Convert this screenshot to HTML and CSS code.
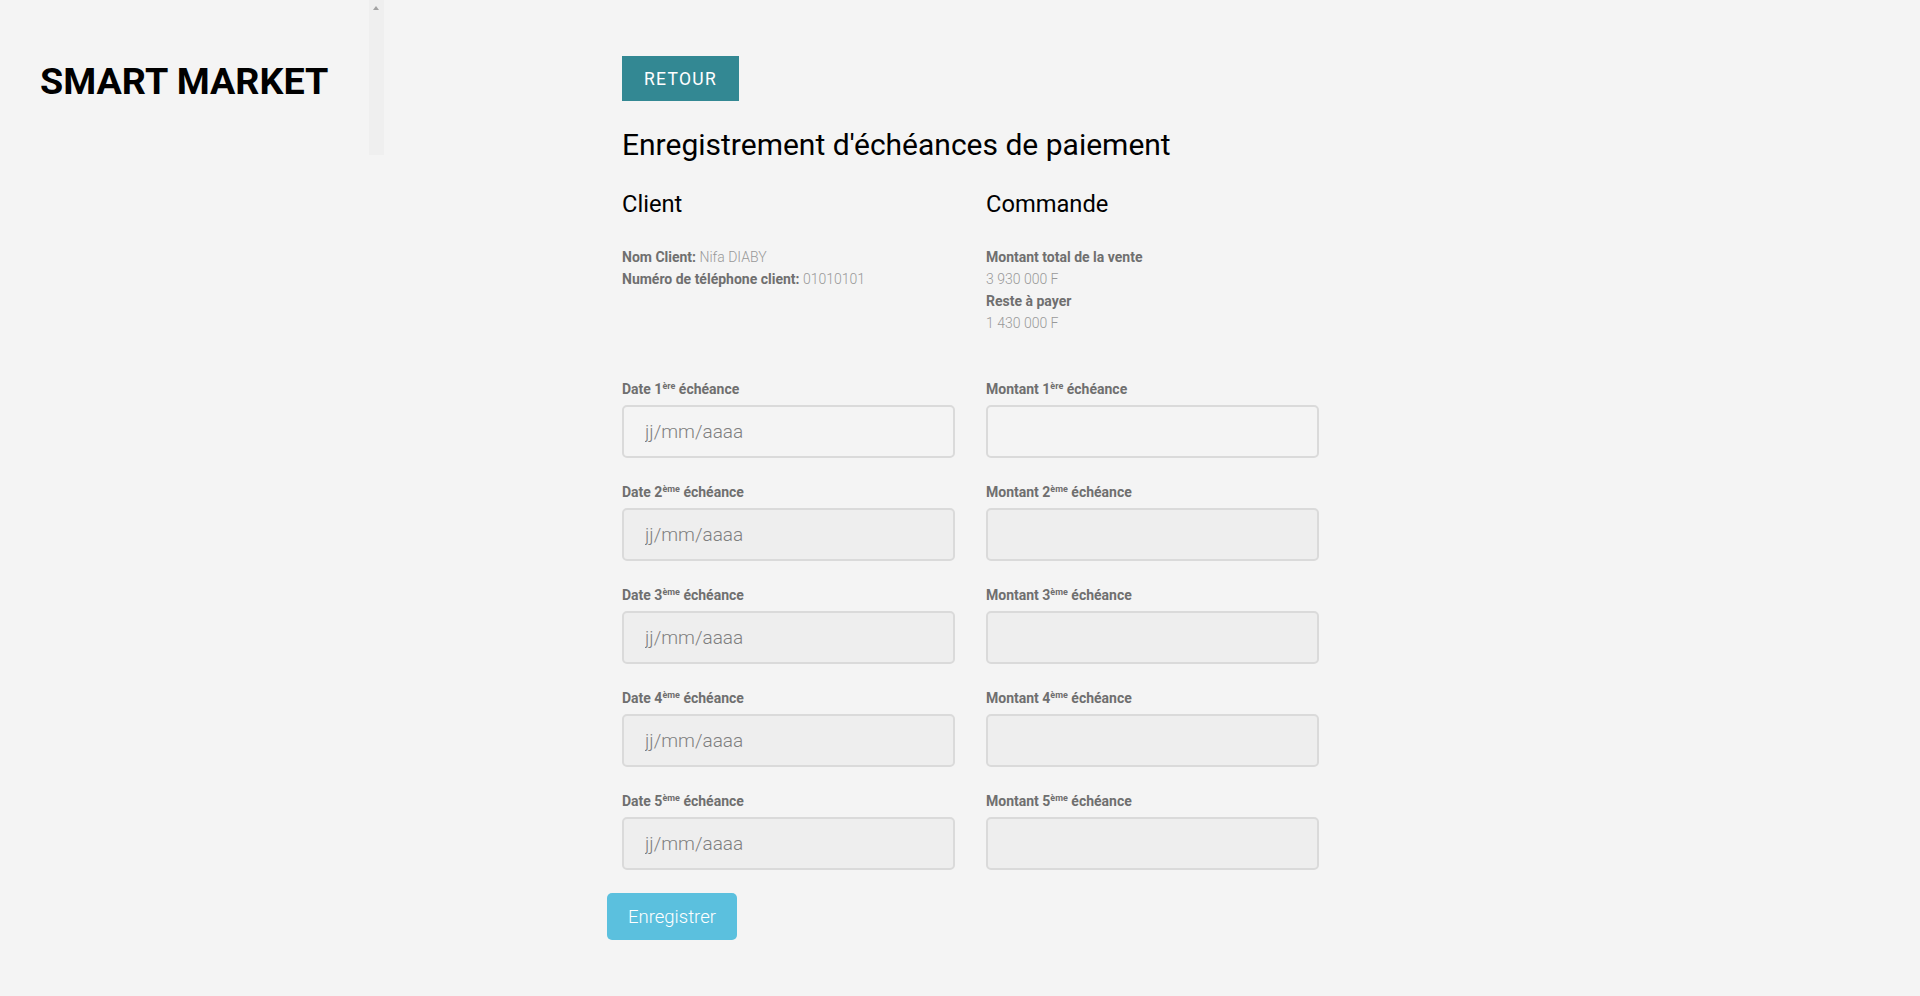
FILE: index.html
```html
<!DOCTYPE html>
<html lang="fr">
<head>
<meta charset="utf-8">
<title>Smart Market</title>
<link rel="stylesheet" href="styles.css">
</head>
<body>
<div class="page">
  <aside class="sidebar">
    <div class="brand">SMART MARKET</div>
    <div class="scroll-strip"><span class="scroll-arrow"></span></div>
  </aside>
  <main class="main">
    <button class="btn-back" type="button">RETOUR</button>
    <h1 class="title">Enregistrement d'échéances de paiement</h1>
    <div class="info-grid">
      <div class="info-col">
        <h2 class="section">Client</h2>
        <p class="line"><b>Nom Client:</b> <span class="val">Nifa DIABY</span></p>
        <p class="line"><b>Numéro de téléphone client:</b> <span class="val">01010101</span></p>
      </div>
      <div class="info-col">
        <h2 class="section">Commande</h2>
        <p class="line"><b>Montant total de la vente</b></p>
        <p class="line val">3 930 000 F</p>
        <p class="line"><b>Reste à payer</b></p>
        <p class="line val">1 430 000 F</p>
      </div>
    </div>
    <form class="form">
      <div class="fields">
        <div class="field"><label class="lbl">Date 1<sup>ère</sup> échéance</label><input class="inp" type="text" placeholder="jj/mm/aaaa"></div>
        <div class="field"><label class="lbl">Montant 1<sup>ère</sup> échéance</label><input class="inp" type="text"></div>
        <div class="field"><label class="lbl">Date 2<sup>ème</sup> échéance</label><input class="inp" type="text" placeholder="jj/mm/aaaa" disabled></div>
        <div class="field"><label class="lbl">Montant 2<sup>ème</sup> échéance</label><input class="inp" type="text" disabled></div>
        <div class="field"><label class="lbl">Date 3<sup>ème</sup> échéance</label><input class="inp" type="text" placeholder="jj/mm/aaaa" disabled></div>
        <div class="field"><label class="lbl">Montant 3<sup>ème</sup> échéance</label><input class="inp" type="text" disabled></div>
        <div class="field"><label class="lbl">Date 4<sup>ème</sup> échéance</label><input class="inp" type="text" placeholder="jj/mm/aaaa" disabled></div>
        <div class="field"><label class="lbl">Montant 4<sup>ème</sup> échéance</label><input class="inp" type="text" disabled></div>
        <div class="field"><label class="lbl">Date 5<sup>ème</sup> échéance</label><input class="inp" type="text" placeholder="jj/mm/aaaa" disabled></div>
        <div class="field"><label class="lbl">Montant 5<sup>ème</sup> échéance</label><input class="inp" type="text" disabled></div>
      </div>
      <button class="btn-save" type="button">Enregistrer</button>
    </form>
  </main>
</div>
</body>
</html>
```

FILE: styles.css
```css
* { box-sizing: border-box; }
html, body { margin: 0; padding: 0; }
body {
  background: #f4f4f4;
  font-family: Roboto, "Liberation Sans", Arial, sans-serif;
  color: #000;
  min-height: 996px;
}
.page {
  display: flex;
  align-items: flex-start;
}
.sidebar {
  width: 384px;
  flex: none;
  display: flex;
  align-items: flex-start;
  height: 155px;
}
.brand {
  width: 369px;
  padding: 58px 0 0 40px;
  font-size: 37.7px;
  font-weight: 700;
  line-height: 47px;
  color: #000;
  white-space: nowrap;
}
.scroll-strip {
  width: 15px;
  height: 155px;
  background: #efefef;
  position: relative;
}
.scroll-arrow {
  position: absolute;
  left: 4px;
  top: 6px;
  width: 0;
  height: 0;
  border-left: 3.5px solid transparent;
  border-right: 3.5px solid transparent;
  border-bottom: 4px solid #a3a3a3;
}
.main {
  padding: 56px 0 0 238px;
  flex: none;
  width: 1100px;
}
.btn-back {
  display: block;
  width: 117px;
  height: 45px;
  border: none;
  margin: 0;
  background: #338893;
  color: #fff;
  font-family: Roboto, sans-serif;
  font-size: 17.5px;
  letter-spacing: 1.3px;
  padding: 0;
  cursor: pointer;
}
.title {
  margin: 27px 0 0;
  font-size: 30px;
  font-weight: 400;
  line-height: 33px;
}
.info-grid {
  display: grid;
  grid-template-columns: 364px 364px;
  margin-top: 30px;
}
.section {
  margin: 0 0 29px;
  font-size: 23.7px;
  font-weight: 400;
  line-height: 26px;
}
.line {
  margin: 0;
  font-size: 14px;
  line-height: 22px;
  color: #777;
  white-space: nowrap;
}
.line b { font-weight: 700; color: #6f6f6f; }
.val { color: #999; font-weight: 300; }
.form { margin-top: 45px; }
.fields {
  display: grid;
  grid-template-columns: 333px 333px;
  column-gap: 31px;
  row-gap: 24px;
}
.field { display: flex; flex-direction: column; }
.lbl {
  font-size: 14px;
  font-weight: 700;
  color: #6f6f6f;
  line-height: 20px;
  margin-bottom: 6px;
  white-space: nowrap;
}
.lbl sup {
  font-size: 9px;
  line-height: 0;
  vertical-align: 5px;
}
.inp {
  width: 333px;
  height: 53px;
  border: 2px solid #dadada;
  border-radius: 5px;
  background: #f4f4f4;
  padding: 0 0 0 21px;
  font-family: Roboto, sans-serif;
  font-size: 19px;
  font-weight: 300;
  color: #555;
  outline: none;
  margin: 0;
}
.inp:disabled { background: #eeeeee; }
.inp::placeholder { color: #7e7e7e; opacity: 1; }
.btn-save {
  display: block;
  margin: 23px 0 0 -15px;
  width: 130px;
  height: 47px;
  border: none;
  border-radius: 5px;
  background: #5bc0de;
  color: #fff;
  font-family: Roboto, sans-serif;
  font-size: 18.5px;
  font-weight: 300;
  padding: 0;
  cursor: pointer;
}
```
